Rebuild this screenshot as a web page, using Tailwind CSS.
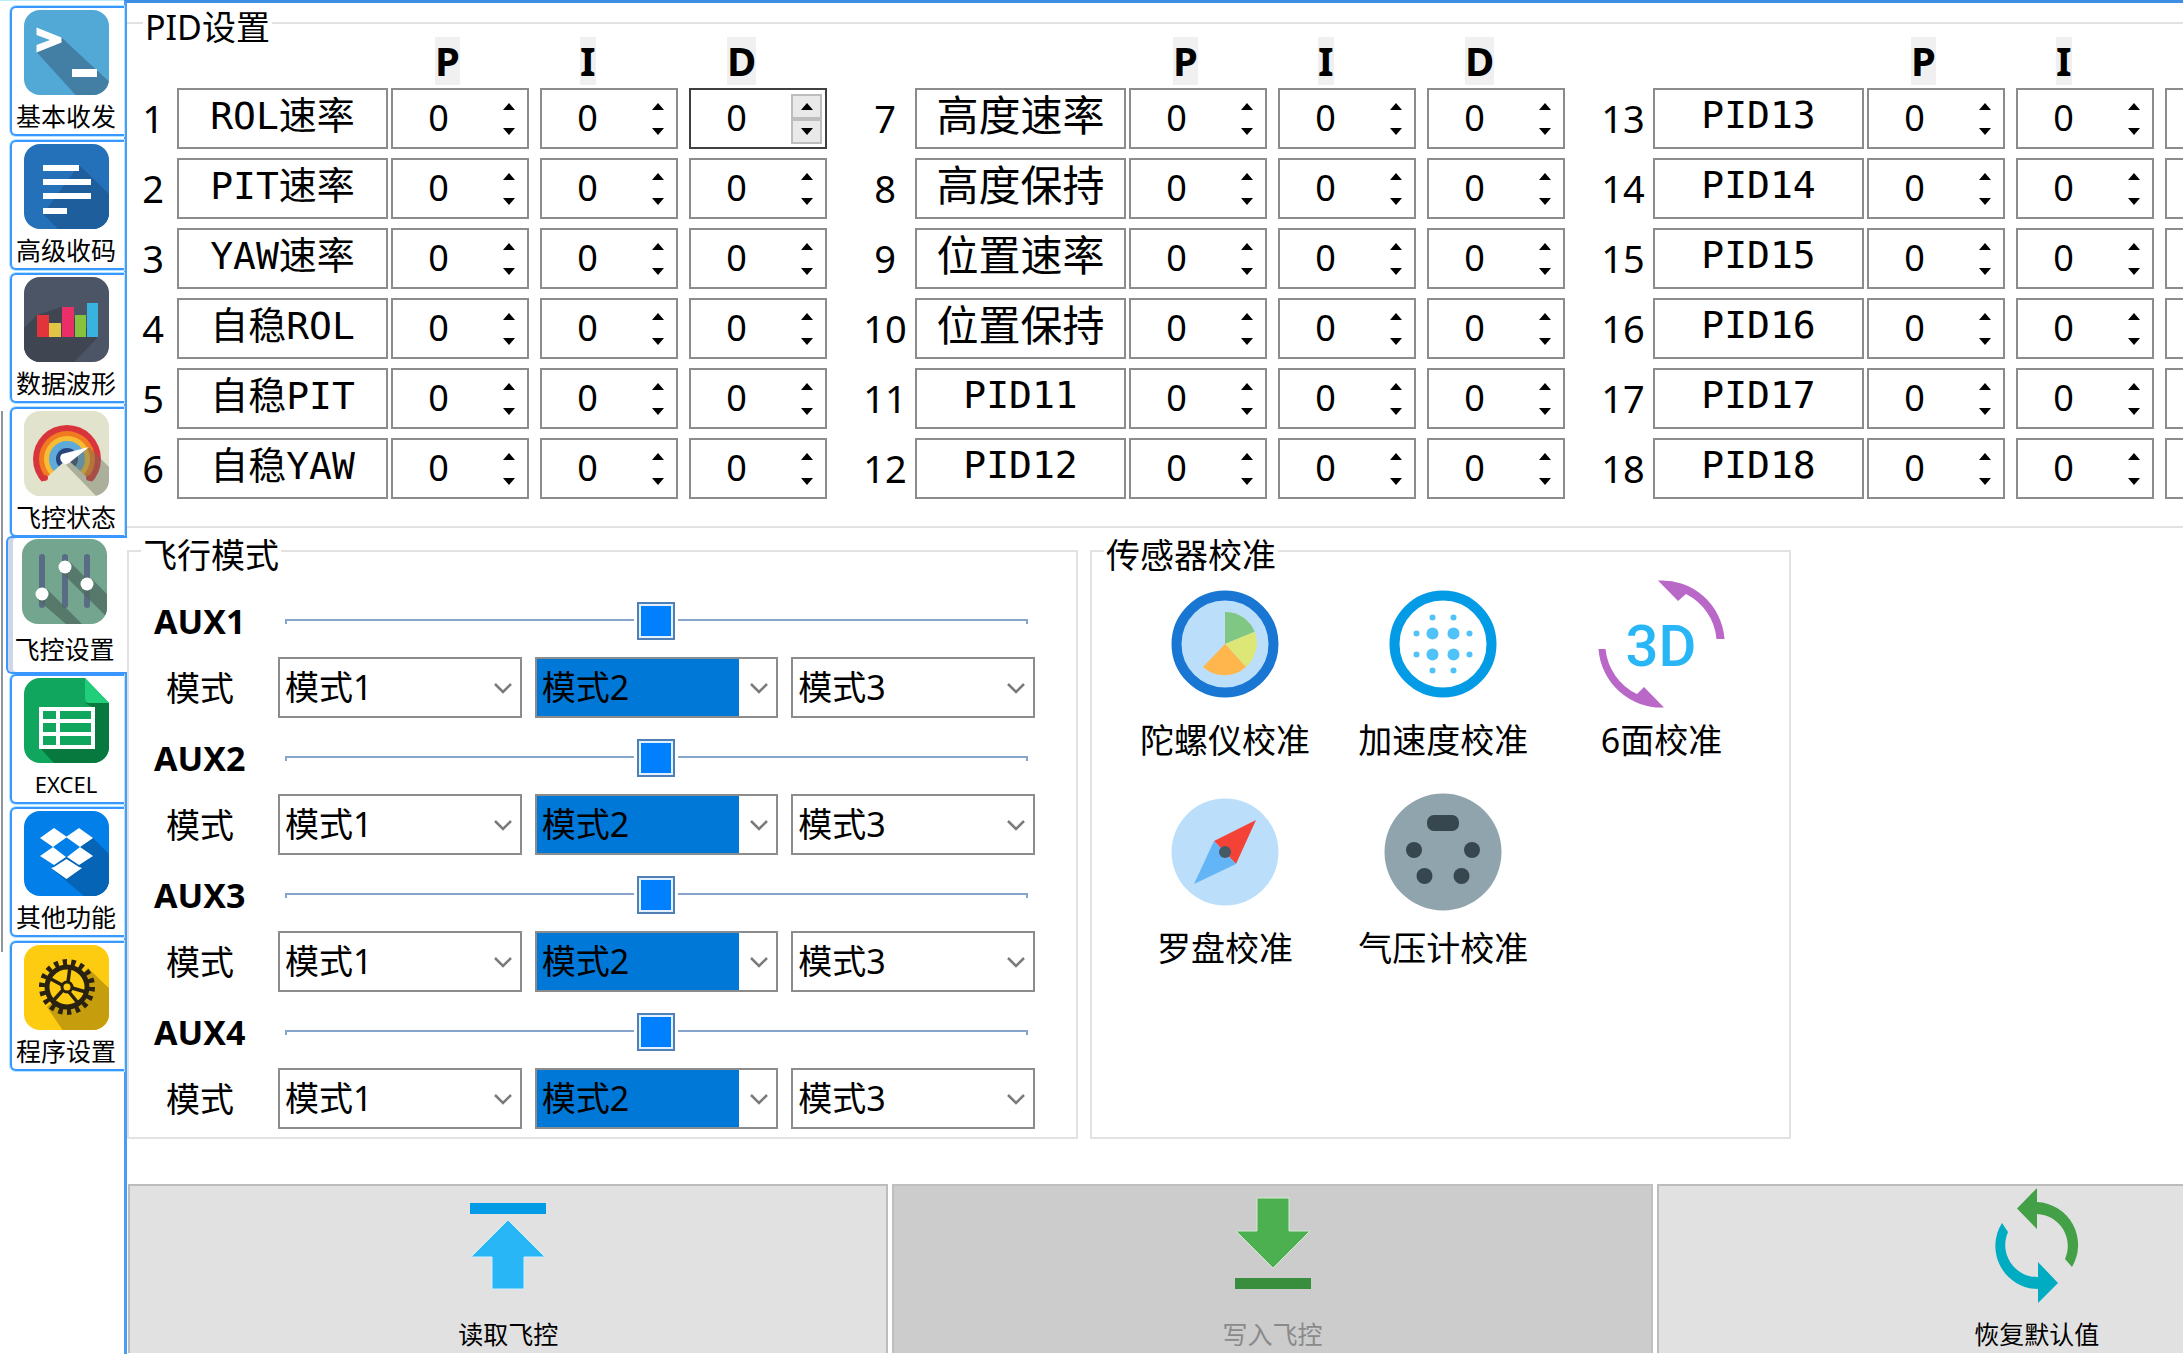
<!DOCTYPE html>
<html lang="zh-CN">
<head>
<meta charset="utf-8">
<title>飞控设置</title>
<script src="https://cdn.jsdelivr.net/npm/@tailwindcss/browser@4"></script>
</head>
<body class="min-h-screen overflow-x-hidden bg-white text-black font-['Noto_Sans','Noto_Sans_CJK_SC',sans-serif]">
<svg class="absolute size-0" aria-hidden="true"><defs><clipPath id="tile"><rect width="85" height="85" rx="16"/></clipPath></defs></svg>
<div class="flex min-h-screen overflow-hidden">

  <nav class="relative w-[124px] shrink-0 border-t border-[#b9ecfb] pt-[5px] pl-[10px]">
    <div class="absolute top-[410px] left-px h-[541px] w-0.5 bg-[#8d949c]"></div>
    <div class="flex h-[1065px] flex-col justify-between text-[25px] leading-[34px] whitespace-nowrap">
      <button class="flex h-[130px] flex-col items-center gap-1 rounded-l-md border-2 border-r-0 border-[#3a97ff] bg-white pt-0.5 pr-1 shadow-[0_0_0_1px_#b4e4ff]">
        <svg class="size-[85px] shrink-0" viewBox="0 0 85 85"><g clip-path="url(#tile)"><rect width="85" height="85" fill="#53a9d6"/><path d="M37 27L90 76V90H56L12.500 42Z" fill="#437fa5"/><path d="M12.500 17.500L37.500 27.500V32.500L12.500 42.500V35L26 30L12.500 25Z" fill="#fff"/><rect x="48" y="59" width="25" height="8" fill="#fff"/></g></svg>
        <span>基本收发</span>
      </button>
      <button class="flex h-[130px] flex-col items-center gap-1 rounded-l-md border-2 border-r-0 border-[#3a97ff] bg-white pt-0.5 pr-1 shadow-[0_0_0_1px_#b4e4ff]">
        <svg class="size-[85px] shrink-0" viewBox="0 0 85 85"><g clip-path="url(#tile)"><rect width="85" height="85" fill="#2470b9"/><path d="M55 21L85 50V85H34L19 70Z" fill="#1f5e9d"/><g fill="#fff"><rect x="19" y="21" width="36" height="6"/><rect x="19" y="35" width="48" height="6"/><rect x="19" y="49" width="48" height="6"/><rect x="19" y="64" width="24" height="6"/></g></g></svg>
        <span>高级收码</span>
      </button>
      <button class="flex h-[130px] flex-col items-center gap-1 rounded-l-md border-2 border-r-0 border-[#3a97ff] bg-white pt-0.5 pr-1 shadow-[0_0_0_1px_#b4e4ff]">
        <svg class="size-[85px] shrink-0" viewBox="0 0 85 85"><g clip-path="url(#tile)"><rect width="85" height="85" fill="#4c5566"/><path d="M0 51L13 38L37 30L74 60L50 85H0Z" fill="#3f4652"/><rect x="13" y="38" width="12" height="22" fill="#e2353b"/><rect x="25" y="46" width="12" height="14" fill="#e3c545"/><rect x="38" y="30" width="12" height="30" fill="#ea2f68"/><rect x="51" y="38" width="11" height="22" fill="#86c23c"/><rect x="63" y="26" width="11" height="34" fill="#38b3e0"/></g></svg>
        <span>数据波形</span>
      </button>
      <button class="flex h-[130px] flex-col items-center gap-1 rounded-l-md border-2 border-r-0 border-[#3a97ff] bg-white pt-0.5 pr-1 shadow-[0_0_0_1px_#b4e4ff]">
        <svg class="size-[85px] shrink-0" viewBox="0 0 85 85"><g clip-path="url(#tile)"><rect width="85" height="85" fill="#e1e3cd"/><circle cx="43" cy="48" r="34" fill="#d9343b"/><circle cx="43" cy="48" r="28" fill="#f07b20"/><circle cx="43" cy="48" r="23" fill="#f9bd35"/><circle cx="43" cy="48" r="18" fill="#5eaad8"/><circle cx="43" cy="48" r="11" fill="#27467d"/><path d="M43 48L10 78V85H76V78Z" fill="#e1e3cd"/><ellipse cx="20" cy="67" rx="4" ry="3" fill="#d9343b"/><ellipse cx="66" cy="67" rx="4" ry="3" fill="#d9343b"/><path d="M65 36L90 61V90H77L42 54Z" fill="#6d6f5c" opacity=".45"/><path d="M65 36L38 43Q35 46 37 50Q40 55 45 52Z" fill="#fff"/></g></svg>
        <span>飞控状态</span>
      </button>
      <button aria-current="page" class="relative z-10 -my-1 -mr-[3px] -ml-1 flex h-[138px] flex-col items-center gap-1 rounded-l-md border-2 border-r-0 border-[#3a97ff] bg-white pt-px pr-1.5 shadow-[inset_5px_0_0_#cfd6e8]">
        <svg class="size-[85px] shrink-0" viewBox="0 0 85 85"><g clip-path="url(#tile)"><rect width="85" height="85" fill="#74a68f"/><g stroke="#5a6c85" stroke-width="6" stroke-linecap="round"><path d="M20 18V66M43 18V66M65 18V66"/></g><path d="M25 50L60 85H44L15 60ZM48 23L85 60V78L39 33ZM70 40L85 55V66L61 50Z" fill="#4c6a5f" opacity=".75"/><g fill="#fff"><circle cx="20" cy="55" r="6.500"/><circle cx="43" cy="28" r="6.500"/><circle cx="65" cy="45" r="6.500"/></g></g></svg>
        <span class="mt-1">飞控设置</span>
      </button>
      <button class="flex h-[130px] flex-col items-center gap-1 rounded-l-md border-2 border-r-0 border-[#3a97ff] bg-white pt-0.5 pr-1 shadow-[0_0_0_1px_#b4e4ff]">
        <svg class="size-[85px] shrink-0" viewBox="0 0 85 85"><g clip-path="url(#tile)"><path d="M0 0H61L85 25V85H0Z" fill="#10a65d"/><path d="M61 25H85V85H30L16 70L70 30Z" fill="#07793f"/><path d="M61 0L85 25H66Q61 25 61 20Z" fill="#21cf7b"/><rect x="17" y="31" width="52" height="38" fill="#10a65d"/><path d="M17 31H69V69H17ZM34 31V69M17 43H69M17 56H69" fill="none" stroke="#fff" stroke-width="4"/></g></svg>
        <span class="text-[22px]">EXCEL</span>
      </button>
      <button class="flex h-[130px] flex-col items-center gap-1 rounded-l-md border-2 border-r-0 border-[#3a97ff] bg-white pt-0.5 pr-1 shadow-[0_0_0_1px_#b4e4ff]">
        <svg class="size-[85px] shrink-0" viewBox="0 0 85 85"><g clip-path="url(#tile)"><rect width="85" height="85" fill="#027fe8"/><path d="M69 27L85 43V85H60L27 57L43 45Z" fill="#0564b5"/><path d="M43 27L57 36L43 46L29 36Z" fill="#027fe8"/><g fill="#fff"><path d="M30 17L43 26L29 36L16 27Z"/><path d="M55 17L42 26L56 36L69 27Z"/><path d="M16 45L29 36L42 46L30 54Z"/><path d="M69 45L56 36L43 46L55 54Z"/><path d="M27 57L30 56L42.500 48L55 56L58 57L42.500 68Z"/></g></g></svg>
        <span>其他功能</span>
      </button>
      <button class="flex h-[130px] flex-col items-center gap-1 rounded-l-md border-2 border-r-0 border-[#3a97ff] bg-white pt-0.5 pr-1 shadow-[0_0_0_1px_#b4e4ff]">
        <svg class="size-[85px] shrink-0" viewBox="0 0 85 85"><g clip-path="url(#tile)"><rect width="85" height="85" fill="#fdcb0f"/><path d="M64 23L90 48V90H42L23 62Z" fill="#c59d0d"/><circle cx="43" cy="42" r="20" fill="#fdcb0f"/><g fill="none" stroke="#2a2210"><circle cx="43" cy="42" r="20" stroke-width="5"/><circle cx="43" cy="42" r="24.500" stroke-width="7" pathLength="36" stroke-dasharray="1"/><circle cx="43" cy="42" r="5" stroke-width="3"/><path d="M44 37L46 22M48 43L62 47M45 47L54 58M39 45L29 56M38 40L25 33" stroke-width="3.500"/></g></g></svg>
        <span>程序设置</span>
      </button>
    </div>
  </nav>

  <main class="min-w-0 flex-1 border-t-3 border-l-3 border-t-[#3d8fe6] border-l-[#4a9df5]">
    <fieldset class="h-[525px] min-w-0 border-y-2 border-[#e2e2e2]">
      <legend class="ml-4 px-0.5 pt-2 text-[34px] leading-8">PID设置</legend>
      <div id="pid" class="-mt-1.5 flex gap-7 pl-0.5"></div>
    </fieldset>

    <div class="mt-[3px] grid grid-cols-[95fr_70fr_38fr] gap-3">
      <fieldset class="h-[608px] min-w-0 border-2 border-[#e2e2e2]">
        <legend class="ml-3 px-0.5 pt-2 text-[34px] leading-8">飞行模式</legend>
        <div id="modes" class="flex flex-col gap-5 pt-[30px] pr-[41px] pl-[25px] text-[34px]"></div>
      </fieldset>

      <fieldset class="h-[608px] min-w-0 border-2 border-[#e2e2e2]">
        <legend class="ml-3 px-0.5 pt-2 text-[34px] leading-8">传感器校准</legend>
        <div class="grid grid-cols-3 gap-y-7 pt-[9px] pr-[18px] pl-6 text-[34px] leading-10 whitespace-nowrap">
          <button class="flex flex-col items-center gap-3">
            <svg class="size-32" viewBox="-64 -64 128 128"><circle r="48.500" fill="#bbdefb" stroke="#1976d2" stroke-width="10"/><path d="M0 0V-32A32 32 0 0 1 29.700 -12.300Z" fill="#81c784"/><path d="M0 0L29.700 -12.300A32 32 0 0 1 21 23Z" fill="#dce775"/><path d="M0 0L21 23A32 32 0 0 1 -22 23Z" fill="#ffb74d"/></svg>
            陀螺仪校准
          </button>
          <button class="flex flex-col items-center gap-3">
            <svg class="size-32" viewBox="-64 -64 128 128"><circle r="48.500" fill="#fff" stroke="#039be5" stroke-width="10"/><g fill="#4fc3f7"><circle cx="-10.500" cy="-10.500" r="6"/><circle cx="10.500" cy="-10.500" r="6"/><circle cx="-10.500" cy="10.500" r="6"/><circle cx="10.500" cy="10.500" r="6"/><circle cx="-26.500" cy="-10.500" r="3"/><circle cx="26.500" cy="-10.500" r="3"/><circle cx="-26.500" cy="10.500" r="3"/><circle cx="26.500" cy="10.500" r="3"/><circle cx="-10.500" cy="-26.500" r="3"/><circle cx="10.500" cy="-26.500" r="3"/><circle cx="-10.500" cy="26.500" r="3"/><circle cx="10.500" cy="26.500" r="3"/></g></svg>
            加速度校准
          </button>
          <button class="flex flex-col items-center gap-3">
            <svg class="size-32" viewBox="-64 -64 128 128"><g fill="#ba68c8"><path d="M-4 -63.500A63 63 0 0 1 62.500 -5H54.500A56 56 0 0 0 24 -50L16 -43Z"/><path d="M2 63.500A63 63 0 0 1 -63.500 5H-56.500A56 56 0 0 0 -25 50L-18 43Z"/></g><text x="-1" y="22" text-anchor="middle" class="font-['Roboto',sans-serif] text-[58px] font-medium" fill="#29b6f6">3D</text></svg>
            6面校准
          </button>
          <button class="flex flex-col items-center gap-3">
            <svg class="size-32" viewBox="-64 -64 128 128"><circle r="53.500" fill="#bbdefb"/><path d="M31 -32L-11 -11L11 12Z" fill="#f44336"/><path d="M-31 32L-11 -11L11 12Z" fill="#64b5f6"/><circle r="6" fill="#455a64"/></svg>
            罗盘校准
          </button>
          <button class="flex flex-col items-center gap-3">
            <svg class="size-32" viewBox="-64 -64 128 128"><circle r="58.500" fill="#90a4ae"/><g fill="#37474f"><rect x="-16" y="-37" width="32" height="16" rx="7"/><circle cx="-29" cy="-2" r="8"/><circle cx="29" cy="-2" r="8"/><circle cx="-18.500" cy="24" r="8"/><circle cx="18.500" cy="24" r="8"/></g></svg>
            气压计校准
          </button>
        </div>
      </fieldset>
    </div>

    <div class="mt-[45px] flex gap-1 pl-px text-[25px] leading-[34px]">
      <button class="flex h-[169px] w-[37%] shrink-0 flex-col items-center border-2 border-b-0 border-[#bcbcbc] bg-[#e1e1e1] pt-0.5">
        <svg class="h-[118px] w-[100px]" viewBox="0 0 100 118"><rect x="12" y="15" width="76" height="11" fill="#039be5"/><path d="M50 32L87 69H66V101H34V69H13Z" fill="#29b6f6" stroke="#d3eefb" stroke-width="1"/></svg>
        <span class="mt-[11px]">读取飞控</span>
      </button>
      <button disabled class="flex h-[169px] w-[37%] shrink-0 flex-col items-center border-2 border-b-0 border-[#bfbfbf] bg-[#cccccc] pt-0.5 text-[#8a8a8a]">
        <svg class="h-[118px] w-[100px]" viewBox="0 0 100 118"><path d="M34 10H66V43H87L50 80L13 43H34Z" fill="#4caf50" stroke="#d5ead5" stroke-width="1"/><rect x="12" y="90" width="76" height="11" fill="#388e3c"/></svg>
        <span class="mt-[11px]">写入飞控</span>
      </button>
      <button class="flex h-[169px] w-[37%] shrink-0 flex-col items-center border-2 border-b-0 border-[#bcbcbc] bg-[#e1e1e1] pt-0.5">
        <svg class="h-[118px] w-[100px]" viewBox="0 0 100 118"><path d="M50 0L30 20.500L50 41V26A32 32 0 0 1 78 71L85 79A43 43 0 0 0 50 14Z" fill="#43a047"/><path d="M51 115L71 95L51 74V89A32 32 0 0 1 21 44L15 35A43 43 0 0 0 51 101Z" fill="#00acc1"/></svg>
        <span class="mt-[11px]">恢复默认值</span>
      </button>
    </div>
  </main>
</div>

<script>
const names = ['ROL速率', 'PIT速率', 'YAW速率', '自稳ROL', '自稳PIT', '自稳YAW',
  '高度速率', '高度保持', '位置速率', '位置保持', 'PID11', 'PID12',
  'PID13', 'PID14', 'PID15', 'PID16', 'PID17', 'PID18'];

// Chinese-only names are set larger; names with Chinese need a little more room below.
const nameSize = name =>
  !/[A-Z]/.test(name) ? 'pb-3 text-[42px]' : name.startsWith('PID') ? 'pb-2 text-[38px]' : 'pb-3 text-[38px]';

const spin = (n, k) => {
  const hot = n === 1 && k === 'D';
  const btn = hot ? 'flex h-[25px] items-center justify-center border-2 border-[#bdbdbd] bg-[#e9e9e9]' : 'flex h-[25px] items-center justify-center';
  return `<div class="${hot ? 'relative h-[61px] w-[138px] border-2 border-[#404040]' : 'relative h-[61px] w-[138px] border-2 border-[#8c8c8c]'}">
    <input type="number" value="0" aria-label="${k}${n}" class="size-full bg-transparent pr-[38px] pb-0.5 pl-2.5 text-center text-[36px] leading-none [appearance:textfield] outline-none">
    <div class="absolute top-1 right-[3px] w-[31px]">
      <button class="${btn} w-full" aria-label="增加"><svg class="h-[7px] w-3" viewBox="0 0 12 7"><path d="M6 0L12 7H0Z"/></svg></button>
      <button class="${btn} w-full" aria-label="减少"><svg class="h-[7px] w-3" viewBox="0 0 12 7"><path d="M0 0H12L6 7Z"/></svg></button>
    </div></div>`;
};

document.getElementById('pid').innerHTML = [0, 1, 2].map(g => `
  <div class="flex shrink-0 flex-col gap-[9px]">
    <div class="-mb-1.5 flex h-12 text-[40px] leading-[48px] font-bold">
      <div class="${g ? 'w-[274px]' : 'w-[262px]'}"></div>
      <div class="w-[149px] pl-11"><span class="block w-fit bg-[#f0f0f0]">P</span></div>
      <div class="w-[149px] pl-10"><span class="block w-fit bg-[#f0f0f0]">I</span></div>
      <div class="pl-[38px]"><span class="block w-fit bg-[#f0f0f0]">D</span></div>
    </div>
    ${names.slice(g * 6, g * 6 + 6).map((name, i) => { const n = g * 6 + i + 1; return `
    <div class="flex">
      <label for="name${n}" class="${g ? 'w-[60px]' : 'w-12'} shrink-0 pt-0.5 text-center text-[38px] leading-[56px]">${n}</label>
      <input id="name${n}" type="text" value="${name}" class="${nameSize(name)} mr-[3px] h-[61px] w-[211px] border-2 border-[#8c8c8c] text-center leading-none font-['DejaVu_Sans_Mono','Noto_Sans_CJK_SC',monospace] outline-none">
      <div class="flex gap-[11px]">${['P', 'I', 'D'].map(k => spin(n, k)).join('')}</div>
    </div>`; }).join('')}
  </div>`).join('');

const combo = (a, m) => `
  <div class="relative">
    <select aria-label="AUX${a} 模式${m}" class="${m === 2 ? 'bg-[linear-gradient(to_right,#0078d7_calc(100%-37px),white_0)]' : 'bg-white'} h-[61px] w-full appearance-none border-2 border-[#8c8c8c] pl-[5px] outline-none">
      <option>模式${m}</option>
    </select>
    <svg class="pointer-events-none absolute top-[26px] right-[10px] h-[11px] w-[18px]" viewBox="0 0 18 11"><path d="M1 1L9 9L17 1" fill="none" stroke="#7b7b7b" stroke-width="2.500"/></svg>
  </div>`;

document.getElementById('modes').innerHTML = [1, 2, 3, 4].map(a => `
  <div>
    <div class="flex h-10 items-center">
      <label for="aux${a}" class="w-[131px] shrink-0 leading-10 font-bold">AUX${a}</label>
      <div class="relative mr-[7px] h-10 flex-1">
        <div class="absolute top-[18px] h-[5px] w-full border-x-2 border-t-2 border-[#87a5cc]"></div>
        <input id="aux${a}" type="range" value="50" class="absolute inset-0 h-10 w-full appearance-none bg-transparent [&::-webkit-slider-thumb]:size-[38px] [&::-webkit-slider-thumb]:appearance-none [&::-webkit-slider-thumb]:border-2 [&::-webkit-slider-thumb]:border-[#4f80b5] [&::-webkit-slider-thumb]:bg-[#0080ff] [&::-webkit-slider-thumb]:shadow-[inset_0_0_0_2px_#e3f0ff,0_0_0_3px_white]">
      </div>
    </div>
    <div class="mt-4 flex items-center">
      <span class="w-31 shrink-0 pl-3 leading-10">模式</span>
      <div class="grid flex-1 grid-cols-3 gap-[13px]">${[1, 2, 3].map(m => combo(a, m)).join('')}</div>
    </div>
  </div>`).join('');
</script>
</body>
</html>
